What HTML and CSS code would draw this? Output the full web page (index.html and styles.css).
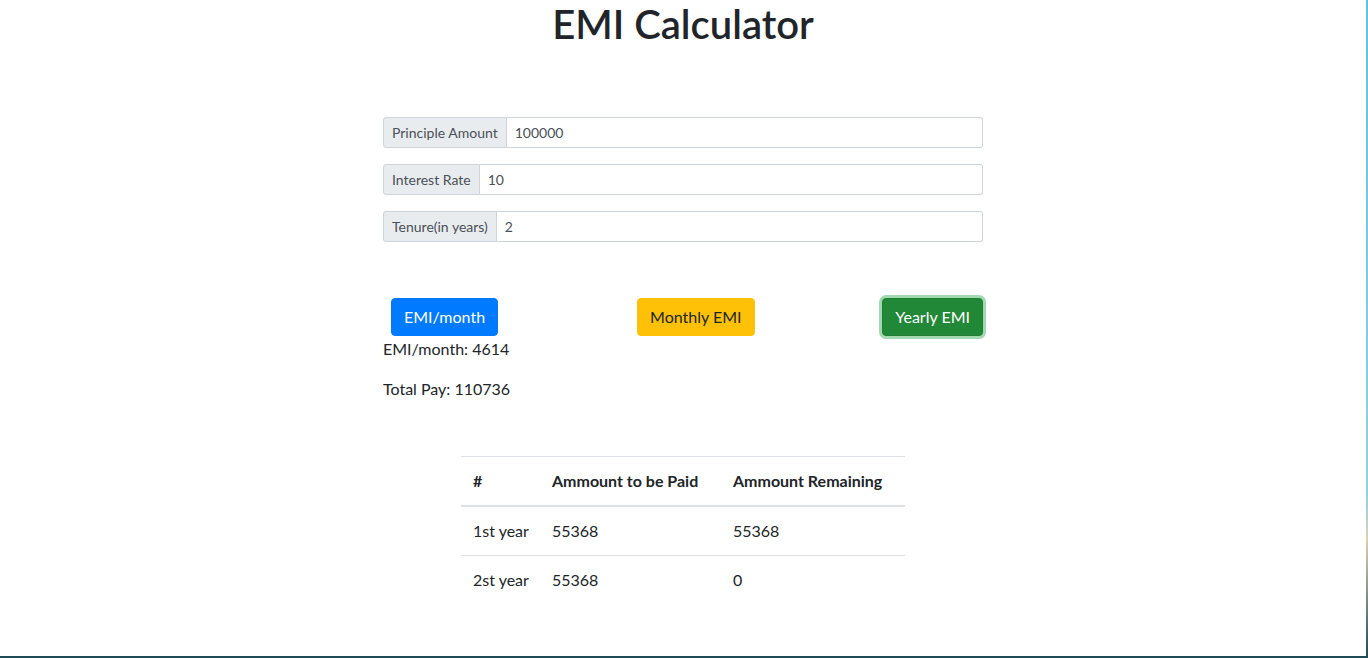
FILE: index.html
```html
<!DOCTYPE html>
<html lang="en">
<head>
<meta charset="utf-8">
<title>EMI Calculator</title>
<link rel="stylesheet" href="styles.css">
</head>
<body>
<div class="page">
  <h1 class="title">EMI Calculator</h1>
  <div class="container">
    <form class="form">
      <div class="input-group">
        <span class="input-label">Principle Amount</span>
        <input class="input-field" type="text" value="100000">
      </div>
      <div class="input-group">
        <span class="input-label">Interest Rate</span>
        <input class="input-field" type="text" value="10">
      </div>
      <div class="input-group">
        <span class="input-label">Tenure(in years)</span>
        <input class="input-field" type="text" value="2">
      </div>
    </form>
    <div class="buttons">
      <button class="btn btn-primary btn-first" type="button">EMI/month</button>
      <button class="btn btn-warning btn-second" type="button">Monthly EMI</button>
      <button class="btn btn-success btn-focus btn-third" type="button">Yearly EMI</button>
    </div>
    <p class="result">EMI/month: 4614</p>
    <p class="result">Total Pay: 110736</p>
    <table class="table">
      <thead>
        <tr>
          <th class="col-a">#</th>
          <th class="col-b">Ammount to be Paid</th>
          <th class="col-c">Ammount Remaining</th>
        </tr>
      </thead>
      <tbody>
        <tr>
          <td>1st year</td>
          <td>55368</td>
          <td>55368</td>
        </tr>
        <tr>
          <td>2st year</td>
          <td>55368</td>
          <td>0</td>
        </tr>
      </tbody>
    </table>
  </div>
</div>
</body>
</html>
```

FILE: styles.css
```css
* { box-sizing: border-box; }
html {
  background: linear-gradient(to bottom, #5cc3e6 0%, #8fd2e6 75%, #d9d2b0 82%, #1d4a55 100%);
  height: 100%;
}
body {
  margin: 0;
  width: 1366px;
  height: 656px;
  background: #fff;
  font-family: "Segoe UI", Lato, "Liberation Sans", sans-serif;
  font-size: 16px;
  line-height: 1.5;
  color: #212529;
  overflow: hidden;
}
.page {
  height: 656px;
}
.title {
  margin: 0 0 8px;
  font-size: 40px;
  font-weight: 600;
  line-height: 1.2;
  text-align: center;
  color: #212529;
}
.container {
  width: 600px;
  margin: 0 auto;
}
.form {
  margin-top: 69px;
  display: flex;
  flex-direction: column;
  gap: 16px;
}
.input-group {
  display: flex;
  height: 31px;
  font-size: 14px;
}
.input-label {
  display: flex;
  align-items: center;
  padding: 0 8px;
  background: #e9ecef;
  border: 1px solid #ced4da;
  border-radius: 3px 0 0 3px;
  color: #495057;
  white-space: nowrap;
}
.input-field {
  flex: 1;
  min-width: 0;
  padding: 0 8px;
  border: 1px solid #ced4da;
  border-left: 0;
  border-radius: 0 3px 3px 0;
  font: inherit;
  font-size: 14px;
  color: #495057;
  background: #fff;
  outline: none;
}
.buttons {
  display: flex;
  align-items: center;
  margin-top: 56px;
}
.btn {
  height: 38px;
  padding: 0 12px;
  font: inherit;
  font-size: 16px;
  border: 1px solid transparent;
  border-radius: 4px;
  cursor: pointer;
}
.btn-primary { background: #007bff; border-color: #007bff; color: #fff; }
.btn-warning { background: #ffc107; border-color: #ffc107; color: #212529; }
.btn-success { background: #28a745; border-color: #28a745; color: #fff; }
.btn-focus {
  background: #218838;
  border-color: #1e7e34;
  box-shadow: 0 0 0 3px rgba(72, 180, 97, 0.5);
}
.btn-first { margin-left: 8px; }
.btn-second { margin-left: 139px; }
.btn-third { margin-left: auto; }
.result {
  margin: 0 0 16px;
}
.result:first-of-type {
  margin-top: 1px;
}
.table {
  margin: 55px auto 0;
  width: 444px;
  table-layout: fixed;
  border-collapse: collapse;
}
.table th,
.table td {
  padding: 12px;
  text-align: left;
  border-top: 1px solid #dee2e6;
  vertical-align: top;
  white-space: nowrap;
}
.table thead th {
  font-weight: 700;
  border-bottom: 2px solid #dee2e6;
}
.col-a { width: 79px; }
.col-b { width: 181px; }
.col-c { width: 184px; }
```
